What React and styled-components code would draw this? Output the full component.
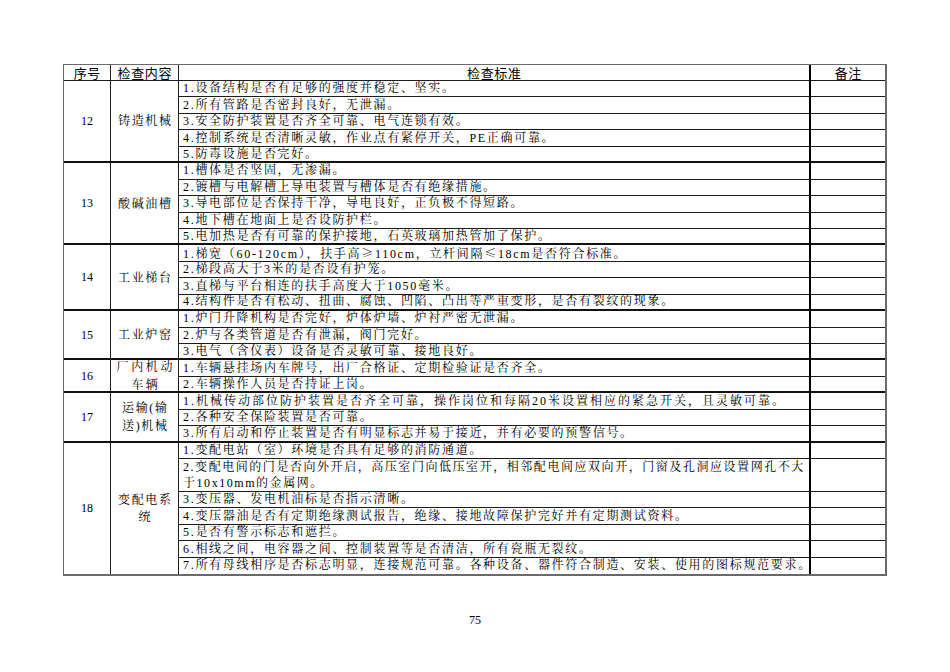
import React from 'react';
import styled, { createGlobalStyle } from 'styled-components';

const UNIT = 16.45;
const LINE = '#1c1c1c';
const OUTER = '#6a6a6a';
const SERIF = `"Liberation Serif", "Noto Serif CJK SC", "Noto Sans CJK SC", serif`;
const CJK = `"Noto Serif CJK SC", "Noto Sans CJK SC", serif`;
const SANS = `"Noto Sans CJK SC", "Noto Sans", sans-serif`;
const COLS = '47px 68px 632px 74px';

const edge = (e) =>
  e === 'thick' ? '2px solid #111' : e === 'thin' ? `1px solid ${LINE}` : 'none';

const Global = createGlobalStyle`
  html, body { margin: 0; padding: 0; background: #fff; }
  body { font-family: ${SERIF}; color: #000; }
`;

const Page = styled.div`
  width: 950px;
  height: 672px;
  box-sizing: border-box;
  padding: 64px 0 0 63px;
  display: flex;
  flex-direction: column;
  align-items: flex-start;
`;

const Table = styled.div`
  width: max-content;
  border-top: 1px solid ${OUTER};
  border-left: 1px solid ${OUTER};
  border-right: 2px solid ${OUTER};
  border-bottom: 2px solid ${OUTER};
`;

const HeaderRow = styled.div`
  display: grid;
  grid-template-columns: ${COLS};
  height: 16px;
`;

const HeaderCell = styled.div`
  box-sizing: border-box;
  display: flex;
  align-items: center;
  justify-content: center;
  border-bottom: 1px solid ${LINE};
  border-right: ${(p) => (p.$rule === 'thick' ? '2px solid #000' : p.$rule === 'thin' ? `1px solid ${LINE}` : 'none')};
  font-family: ${SANS};
  font-size: 13px;
  letter-spacing: 0.6px;
  line-height: 15px;
  padding-left: 0.6px;
`;

const Group = styled.div`
  display: grid;
  grid-template-columns: ${COLS};
  grid-template-rows: ${(p) => p.$rows};
`;

const NoCell = styled.div`
  grid-column: 1;
  grid-row: 1 / -1;
  box-sizing: border-box;
  display: flex;
  align-items: center;
  justify-content: center;
  border-right: 1px solid ${LINE};
  border-bottom: ${(p) => edge(p.$edge)};
  font-size: 12px;
  padding-top: 1px;
`;

const NameCell = styled.div`
  grid-column: 2;
  grid-row: 1 / -1;
  box-sizing: border-box;
  display: flex;
  align-items: center;
  justify-content: center;
  text-align: center;
  border-right: 1px solid ${LINE};
  border-bottom: ${(p) => edge(p.$edge)};
  font-size: 12px;
  letter-spacing: ${(p) => p.$spacing || 1.7}px;
  line-height: 17.5px;
  padding: 2px 0 0 ${(p) => p.$spacing || 1.7}px;
  white-space: nowrap;
`;

const Item = styled.div`
  grid-column: 3;
  box-sizing: border-box;
  display: flex;
  align-items: center;
  padding: 1px 0 0 4px;
  border-right: 2px solid #000;
  border-bottom: ${(p) => edge(p.$edge)};
  font-size: 12px;
  letter-spacing: ${(p) => p.$spacing || 1.7}px;
  line-height: ${UNIT}px;
  white-space: nowrap;
  overflow: visible;
`;

const ItemText = styled.div`
  line-height: ${UNIT - 0.5}px;
`;

const Sym = styled.span`
  font-family: ${CJK};
`;

const Remark = styled.div`
  grid-column: 4;
  box-sizing: border-box;
  border-bottom: ${(p) => edge(p.$edge)};
`;

const PageNo = styled.div`
  width: 824px;
  text-align: center;
  margin-top: 37px;
  font-size: 12px;
  line-height: 14px;
`;

const groups = [
  {
    no: '12',
    name: ['铸造机械'],
    items: [
      '1.设备结构是否有足够的强度并稳定、坚实。',
      '2.所有管路是否密封良好，无泄漏。',
      '3.安全防护装置是否齐全可靠、电气连锁有效。',
      '4.控制系统是否清晰灵敏，作业点有紧停开关，PE正确可靠。',
      '5.防毒设施是否完好。',
    ],
  },
  {
    no: '13',
    name: ['酸碱油槽'],
    items: [
      '1.槽体是否坚固，无渗漏。',
      '2.镀槽与电解槽上导电装置与槽体是否有绝缘措施。',
      '3.导电部位是否保持干净，导电良好，正负极不得短路。',
      '4.地下槽在地面上是否设防护栏。',
      '5.电加热是否有可靠的保护接地，石英玻璃加热管加了保护。',
    ],
  },
  {
    no: '14',
    name: ['工业梯台'],
    items: [
      '1.梯宽（60-120cm），扶手高≥110cm，立杆间隔≤18cm是否符合标准。',
      '2.梯段高大于3米的是否设有护笼。',
      '3.直梯与平台相连的扶手高度大于1050毫米。',
      '4.结构件是否有松动、扭曲、腐蚀、凹陷、凸出等严重变形，是否有裂纹的现象。',
    ],
  },
  {
    no: '15',
    name: ['工业炉窑'],
    items: [
      '1.炉门升降机构是否完好，炉体炉墙、炉衬严密无泄漏。',
      '2.炉与各类管道是否有泄漏，阀门完好。',
      '3.电气（含仪表）设备是否灵敏可靠、接地良好。',
    ],
  },
  {
    no: '16',
    name: ['厂内机动', '车辆'],
    nameSpacing: 2.6,
    items: [
      '1.车辆悬挂场内车牌号，出厂合格证、定期检验证是否齐全。',
      '2.车辆操作人员是否持证上岗。',
    ],
  },
  {
    no: '17',
    name: ['运输(输', '送)机械'],
    items: [
      { lines: ['1.机械传动部位防护装置是否齐全可靠，操作岗位和每隔20米设置相应的紧急开关，且灵敏可靠。'], spacing: 2 },
      '2.各种安全保险装置是否可靠。',
      '3.所有启动和停止装置是否有明显标志并易于接近，并有必要的预警信号。',
    ],
  },
  {
    no: '18',
    name: ['变配电系', '统'],
    items: [
      '1.变配电站（室）环境是否具有足够的消防通道。',
      {
        lines: ['2.变配电间的门是否向外开启，高压室门向低压室开，相邻配电间应双向开，门窗及孔洞应设置网孔不大', '于10x10mm的金属网。'],
        spacing: 1.55,
      },
      '3.变压器、发电机油标是否指示清晰。',
      '4.变压器油是否有定期绝缘测试报告，绝缘、接地故障保护完好并有定期测试资料。',
      '5.是否有警示标志和遮拦。',
      '6.相线之间，电容器之间、控制装置等是否清洁，所有瓷瓶无裂纹。',
      '7.所有母线相序是否标志明显，连接规范可靠。各种设备、器件符合制造、安装、使用的图标规范要求。',
    ],
  },
];

const normalize = (it) => (typeof it === 'string' ? { lines: [it] } : it);

const renderLine = (line) =>
  line.split(/([≥≤])/).map((part, i) =>
    part === '≥' || part === '≤' ? <Sym key={i}>{part}</Sym> : <React.Fragment key={i}>{part}</React.Fragment>
  );

const withBreaks = (lines) =>
  lines.map((l, i) => (
    <React.Fragment key={i}>
      {i > 0 && <br />}
      {renderLine(l)}
    </React.Fragment>
  ));

export default function App() {
  return (
    <>
      <Global />
      <Page>
        <Table>
          <HeaderRow>
            <HeaderCell $rule="thin">序号</HeaderCell>
            <HeaderCell $rule="thin">检查内容</HeaderCell>
            <HeaderCell $rule="thick">检查标准</HeaderCell>
            <HeaderCell>备注</HeaderCell>
          </HeaderRow>
          {groups.map((g, gi) => {
            const lastGroup = gi === groups.length - 1;
            const items = g.items.map(normalize);
            const rows = items.map((it) => `${it.lines.length * UNIT}px`).join(' ');
            const groupEdge = lastGroup ? 'none' : 'thick';
            return (
              <Group key={g.no} $rows={rows}>
                <NoCell $edge={groupEdge}>{g.no}</NoCell>
                <NameCell $edge={groupEdge} $spacing={g.nameSpacing}>
                  <div>{withBreaks(g.name)}</div>
                </NameCell>
                {items.map((it, ii) => {
                  const last = ii === items.length - 1;
                  const e = last ? groupEdge : 'thin';
                  return (
                    <React.Fragment key={ii}>
                      <Item style={{ gridRow: ii + 1 }} $edge={e} $spacing={it.spacing}>
                        <ItemText>{withBreaks(it.lines)}</ItemText>
                      </Item>
                      <Remark style={{ gridRow: ii + 1 }} $edge={e} />
                    </React.Fragment>
                  );
                })}
              </Group>
            );
          })}
        </Table>
        <PageNo>75</PageNo>
      </Page>
    </>
  );
}
